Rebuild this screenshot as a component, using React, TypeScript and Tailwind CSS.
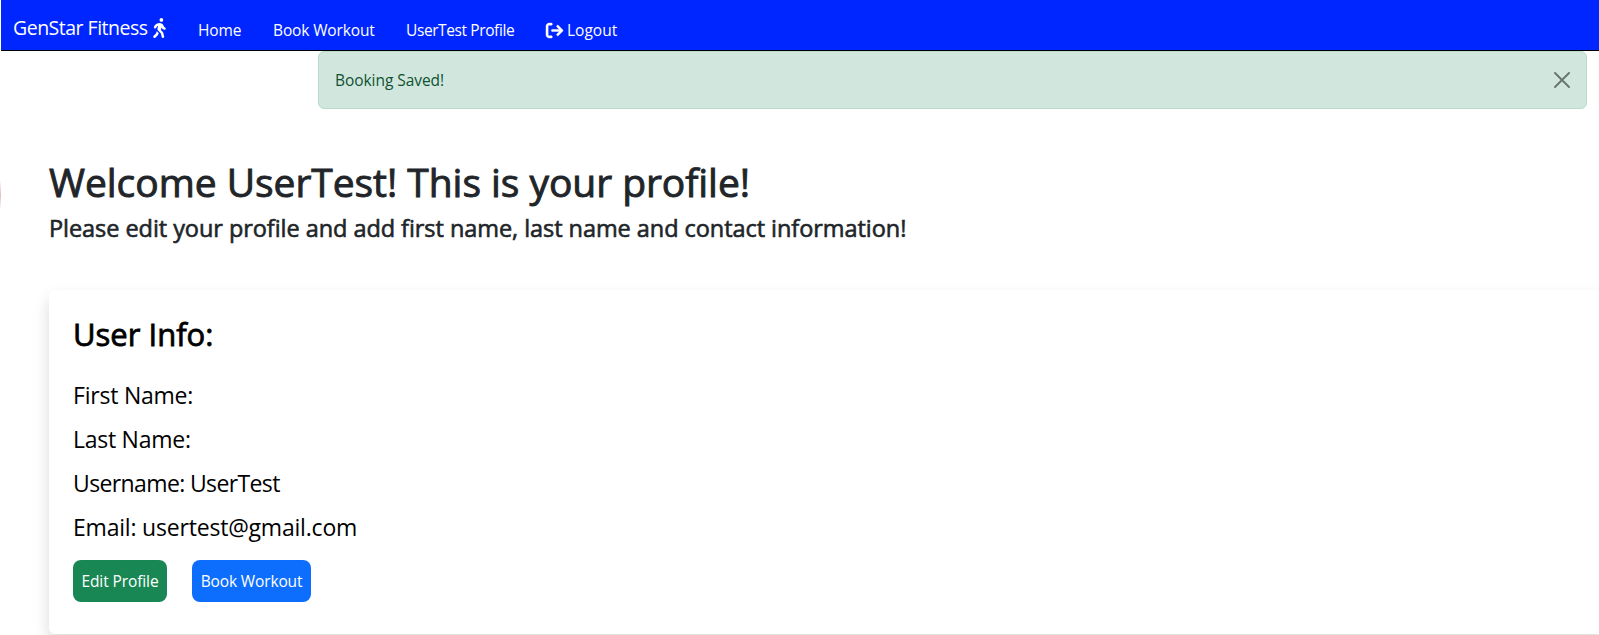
import { FaArrowRightFromBracket, FaPersonWalking } from "react-icons/fa6";

const navLink = "text-[15.5px] leading-6 text-white whitespace-nowrap";
const infoLine = "text-[23px] leading-9 mb-2 whitespace-nowrap";

function Navbar() {
  return (
    <nav className="ml-px flex h-[51px] items-start border-b border-black bg-[#0026ff]">
      <a className="ml-3 mt-[13px] flex w-[153px] items-center text-[19.5px] leading-[30px] text-white whitespace-nowrap">
        <span className="w-[140px] tracking-[-0.5px]">GenStar Fitness</span>
        <FaPersonWalking className="h-5 w-[13px] shrink-0" />
      </a>
      <div className="flex pt-[18px]">
        <a className={`ml-8 w-[43px] tracking-[-0.15px] ${navLink}`}>Home</a>
        <a className={`ml-8 w-[101px] tracking-[-0.13px] ${navLink}`}>Book Workout</a>
        <a className={`ml-8 w-[108px] tracking-[-0.4px] ${navLink}`}>UserTest Profile</a>
        <a className={`ml-8 flex items-center gap-1 ${navLink}`}>
          <FaArrowRightFromBracket className="size-[17px] overflow-visible stroke-white stroke-[14]" />
          <span>Logout</span>
        </a>
      </div>
    </nav>
  );
}

function Alert() {
  return (
    <div className="ml-[318px] mr-3 flex h-[58px] items-center justify-between rounded-md border border-[#badbcc] bg-[#d1e7dd] px-4 text-[15.5px] text-[#0f5132]">
      <span className="pt-[2px] tracking-[-0.05px]">Booking Saved!</span>
      <svg viewBox="0 0 16 16" className="size-4 text-[#6a746f]" stroke="currentColor" strokeWidth="1.9" strokeLinecap="round">
        <path d="M1 1L15 15M15 1L1 15" />
      </svg>
    </div>
  );
}

export default function App() {
  return (
    <div className="relative h-[635px] overflow-hidden bg-white font-['Open_Sans','Noto_Sans',sans-serif] text-[#212529]">
      <div className="absolute left-0 top-[180px] h-[30px] w-px bg-linear-to-b from-white via-[#e3bfc1] to-white" />
      <Navbar />
      <Alert />
      <main className="pl-[49px] pt-[49px]">
        <h1 className="text-[39px] leading-[48px] tracking-[-0.05px] whitespace-nowrap [-webkit-text-stroke:0.9px_currentColor]">Welcome UserTest! This is your profile!</h1>
        <h2 className="mt-2 text-[23.5px] leading-[29px] tracking-[-0.055px] whitespace-nowrap [-webkit-text-stroke:0.6px_currentColor]">Please edit your profile and add first name, last name and contact information!</h2>
        <section className="mt-[47px] -mr-2 h-[344px] rounded-md bg-white px-6 pt-[22px] text-black shadow-[0_8px_16px_rgba(0,0,0,0.15)]">
          <h3 className="mb-[21px] text-[31px] leading-[44px] [-webkit-text-stroke:0.8px_currentColor]">User Info:</h3>
          <p className={`tracking-[-0.22px] ${infoLine}`}>First Name:</p>
          <p className={`tracking-[-0.26px] ${infoLine}`}>Last Name:</p>
          <p className={`tracking-[-0.62px] ${infoLine}`}>Username: UserTest</p>
          <p className={`tracking-[-0.2px] ${infoLine}`}>Email: usertest@gmail.com</p>
          <div className="mt-[15px] flex gap-[25px] text-[15.5px] text-white">
            <button className="h-[42px] w-[94px] rounded-lg bg-[#198754] pt-[2px] tracking-[-0.1px] whitespace-nowrap">Edit Profile</button>
            <button className="h-[42px] w-[119px] rounded-lg bg-[#0d6efd] pt-[2px] tracking-[-0.13px] whitespace-nowrap">Book Workout</button>
          </div>
        </section>
      </main>
    </div>
  );
}
